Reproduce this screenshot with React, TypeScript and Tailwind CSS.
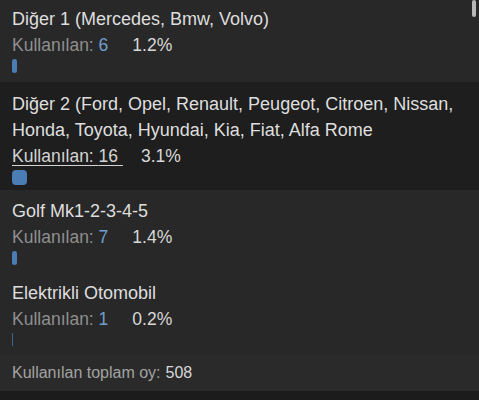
import React from "react";

type Item = { title: string; count: number; pct: string; width: number; active?: boolean; pad: string; bar: string };

const items: Item[] = [
  { title: "Diğer 1 (Mercedes, Bmw, Volvo)", count: 6, pct: "1.2%", width: 5, pad: "pt-[6px] pb-[9px] border-b border-[#202020]", bar: "h-[14px] rounded-[4px]" },
  {
    title: "Diğer 2 (Ford, Opel, Renault, Peugeot, Citroen, Nissan, Honda, Toyota, Hyundai, Kia, Fiat, Alfa Rome",
    count: 16,
    pct: "3.1%",
    width: 15,
    active: true,
    pad: "pt-[8px] pb-[5px] bg-[#1e1e1e]",
    bar: "h-[15px] rounded-[4px]",
  },
  { title: "Golf Mk1-2-3-4-5", count: 7, pct: "1.4%", width: 5, pad: "pt-[8px] pb-[7px]", bar: "h-[14px] rounded-[4px]" },
  { title: "Elektrikli Otomobil", count: 1, pct: "0.2%", width: 1, pad: "pt-[8px] pb-[7px]", bar: "h-[13px] opacity-70" },
];

export default function App() {
  return (
    <div
      className="relative w-[479px] h-[400px] overflow-hidden bg-[#1c1c1c]"
      style={{ fontFamily: '"Liberation Sans", Arial, sans-serif' }}
    >
      <div className="flex flex-col bg-[#282828]">
        {items.map((it, i) => (
          <div key={i} className={`flex flex-col pl-3 pr-3 ${it.pad}`}>
            <div className="text-[18px] leading-[26px] text-[#dedede]">{it.title}</div>
            <div className="text-[17.5px] leading-[27px] flex items-center">
              {it.active ? (
                <span className="text-[#d4d4d4] underline underline-offset-[3px] decoration-[1px]">
                  Kullanılan: {it.count}&nbsp;
                </span>
              ) : (
                <span className="text-[#8f8f8f]">
                  Kullanılan: <span className="text-[#6e9fcf]">{it.count}</span>
                </span>
              )}
              <span className={`${it.active ? "ml-[18px]" : "ml-[24px]"} text-[#d8d8d8]`}>{it.pct}</span>
            </div>
            <div className={`bg-[#4a7db3] ${it.bar}`} style={{ width: it.width }} />
          </div>
        ))}
        <div className="h-[38px] flex items-center pl-3 border-t border-[#262626] bg-[#2a2a2a] text-[16px]">
          <span className="text-[#a3a3a3]">Kullanılan toplam oy:</span>
          <span className="ml-[5px] text-[#d8d8d8]">508</span>
        </div>
      </div>
      <div className="absolute right-[3px] top-0 w-[4px] h-[17px] rounded-full bg-[#b8b8b8]" />
    </div>
  );
}
